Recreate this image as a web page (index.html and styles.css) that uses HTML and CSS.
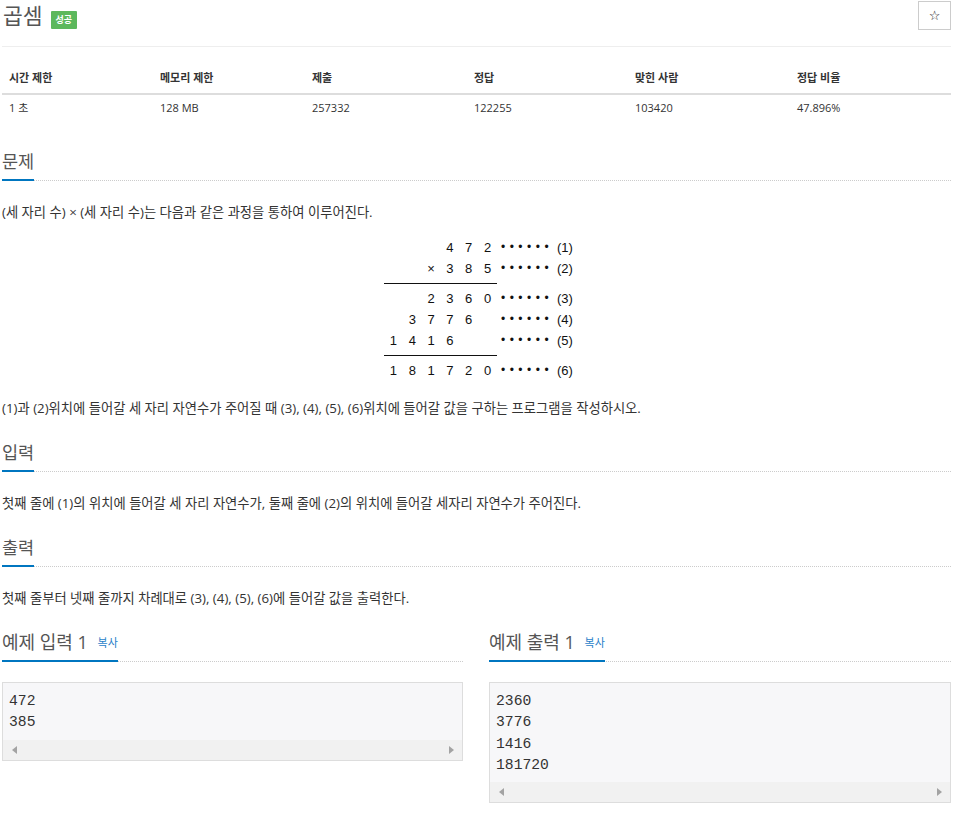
FILE: index.html
```html
<!DOCTYPE html>
<html lang="ko">
<head>
<meta charset="utf-8">
<title>곱셈</title>
<link rel="stylesheet" href="styles.css">
</head>
<body>
<div class="page">
  <div class="title-row">
    <h1 class="title">곱셈</h1>
    <span class="badge">성공</span>
    <button class="star" type="button">☆</button>
  </div>
  <hr class="rule">
  <table class="info">
    <thead>
      <tr>
        <th class="c1">시간 제한</th>
        <th class="c2">메모리 제한</th>
        <th class="c3">제출</th>
        <th class="c4">정답</th>
        <th class="c5">맞힌 사람</th>
        <th class="c6">정답 비율</th>
      </tr>
    </thead>
    <tbody>
      <tr>
        <td>1 초</td>
        <td>128 MB</td>
        <td>257332</td>
        <td>122255</td>
        <td>103420</td>
        <td>47.896%</td>
      </tr>
    </tbody>
  </table>

  <section class="sec sec-first">
    <div class="headline"><h2>문제</h2></div>
    <p class="text">(세 자리 수) × (세 자리 수)는 다음과 같은 과정을 통하여 이루어진다.</p>
    <div class="figure">
      <div class="frow r1"><span></span><span></span><span></span><span>4</span><span>7</span><span>2</span><span class="dots">••••••</span><span class="lbl">(1)</span></div>
      <div class="frow r2"><span></span><span></span><span>×</span><span>3</span><span>8</span><span>5</span><span class="dots">••••••</span><span class="lbl">(2)</span></div>
      <div class="fline l1"></div>
      <div class="frow r3"><span></span><span></span><span>2</span><span>3</span><span>6</span><span>0</span><span class="dots">••••••</span><span class="lbl">(3)</span></div>
      <div class="frow r4"><span></span><span>3</span><span>7</span><span>7</span><span>6</span><span></span><span class="dots">••••••</span><span class="lbl">(4)</span></div>
      <div class="frow r5"><span>1</span><span>4</span><span>1</span><span>6</span><span></span><span></span><span class="dots">••••••</span><span class="lbl">(5)</span></div>
      <div class="fline l2"></div>
      <div class="frow r6"><span>1</span><span>8</span><span>1</span><span>7</span><span>2</span><span>0</span><span class="dots">••••••</span><span class="lbl">(6)</span></div>
    </div>
    <p class="text after-fig">(1)과 (2)위치에 들어갈 세 자리 자연수가 주어질 때 (3), (4), (5), (6)위치에 들어갈 값을 구하는 프로그램을 작성하시오.</p>
  </section>

  <section class="sec">
    <div class="headline"><h2>입력</h2></div>
    <p class="text">첫째 줄에 (1)의 위치에 들어갈 세 자리 자연수가, 둘째 줄에 (2)의 위치에 들어갈 세자리 자연수가 주어진다.</p>
  </section>

  <section class="sec">
    <div class="headline"><h2>출력</h2></div>
    <p class="text">첫째 줄부터 넷째 줄까지 차례대로 (3), (4), (5), (6)에 들어갈 값을 출력한다.</p>
  </section>

  <div class="samples">
    <section class="sample">
      <div class="headline"><h2>예제 입력 1 <a class="copy">복사</a></h2></div>
      <div class="pre-box">
        <pre>472
385</pre>
        <div class="hscroll"><span class="arr-l"></span><span class="arr-r"></span></div>
      </div>
    </section>
    <section class="sample">
      <div class="headline"><h2>예제 출력 1 <a class="copy">복사</a></h2></div>
      <div class="pre-box">
        <pre>2360
3776
1416
181720</pre>
        <div class="hscroll"><span class="arr-l"></span><span class="arr-r"></span></div>
      </div>
    </section>
  </div>
</div>
</body>
</html>
```

FILE: styles.css
```css
html, body {
  margin: 0;
  padding: 0;
  background: #fff;
}

body {
  font-family: "Open Sans", "Noto Sans CJK KR", sans-serif;
  font-size: 13px;
  color: #333;
}

.page {
  width: 949px;
  margin-left: 2px;
}

/* Title row */
.title-row {
  display: flex;
  align-items: flex-start;
  height: 31px;
}

.title {
  margin: 0 0 0 1px;
  font-size: 21.5px;
  font-weight: 400;
  line-height: 31px;
  color: #555;
}

.badge {
  margin: 11px 0 0 8px;
  height: 18px;
  line-height: 18px;
  padding: 0 5px;
  background: #5cb85c;
  color: #fff;
  font-size: 9px;
  font-weight: 700;
  border-radius: 1px;
}

.star {
  margin: 1px 0 0 auto;
  width: 33px;
  height: 29px;
  padding: 0;
  border: 1px solid #ccc;
  background: #fff;
  color: #111;
  font-family: "DejaVu Sans", sans-serif;
  font-size: 13px;
  line-height: 27px;
}

.rule {
  margin: 15px 0 0;
  height: 0;
  border: 0;
  border-top: 1px solid #eee;
}

/* Info table */
.info {
  margin-top: 17px;
  width: 949px;
  border-collapse: collapse;
  table-layout: fixed;
  font-size: 11px;
}

.info th,
.info td {
  box-sizing: border-box;
}

.info th {
  text-align: left;
  font-weight: 700;
  padding: 6px 7px 7px;
  line-height: 16px;
  border-bottom: 2px solid #ddd;
  color: #333;
}

.info td {
  padding: 5px 7px 7px;
  line-height: 16px;
  color: #333;
}

.c1 { width: 151px; }
.c2 { width: 152px; }
.c3 { width: 162px; }
.c4 { width: 161px; }
.c5 { width: 162px; }
.c6 { width: 161px; }

/* Sections */
.sec {
  margin-top: 22px;
}

.sec-first {
  margin-top: 26px;
}

.headline {
  display: flex;
  border-bottom: 1px dotted #ccc;
}

.headline h2 {
  margin: 0 0 -1px;
  padding-bottom: 6px;
  font-size: 17.5px;
  font-weight: 400;
  line-height: 24px;
  color: #555;
  border-bottom: 2px solid #0076c0;
}

.sample .headline h2 {
  font-size: 18px;
}

.text {
  margin: 21px 0 0;
  font-size: 13.3px;
  line-height: 20px;
}

.after-fig {
  margin-top: 17px;
}

/* Multiplication figure */
.figure {
  width: 185px;
  margin: 15px auto 0;
  font-family: "Liberation Sans", sans-serif;
  font-size: 13px;
  color: #111;
}

.frow {
  display: grid;
  grid-template-columns: repeat(6, 18.83px) 60px 20px;
  height: 21px;
  line-height: 21px;
}

.frow span {
  text-align: center;
}

.frow .dots {
  text-align: left;
  padding-left: 4px;
  letter-spacing: 4.5px;
  font-size: 12px;
}

.frow .lbl {
  text-align: left;
}

.fline {
  width: 113px;
  height: 1px;
  background: #111;
  margin-top: 4px;
}

.r3 {
  margin-top: 4px;
}

.r6 {
  margin-top: 4px;
}

/* Samples */
.samples {
  margin-top: 22px;
  display: grid;
  grid-template-columns: 461px 462px;
  column-gap: 26px;
}

.copy {
  margin-left: 5px;
  font-size: 11px;
  line-height: 0;
  color: #2a7fc9;
  vertical-align: 2px;
}

.pre-box {
  margin-top: 20px;
  border: 1px solid #ddd;
  background: #f7f7f9;
}

.pre-box pre {
  margin: 0;
  padding: 8px 6px 6px;
  font-family: "Liberation Mono", monospace;
  font-size: 14.7px;
  line-height: 21.3px;
  color: #333;
}

.hscroll {
  height: 20px;
  background: #f1f1f1;
  display: flex;
  justify-content: space-between;
  align-items: center;
  padding: 0 8px 0 9px;
}

.arr-l {
  width: 0;
  height: 0;
  border-top: 4px solid transparent;
  border-bottom: 4px solid transparent;
  border-right: 5px solid #a3a3a3;
}

.arr-r {
  width: 0;
  height: 0;
  border-top: 4px solid transparent;
  border-bottom: 4px solid transparent;
  border-left: 5px solid #a3a3a3;
}
```
